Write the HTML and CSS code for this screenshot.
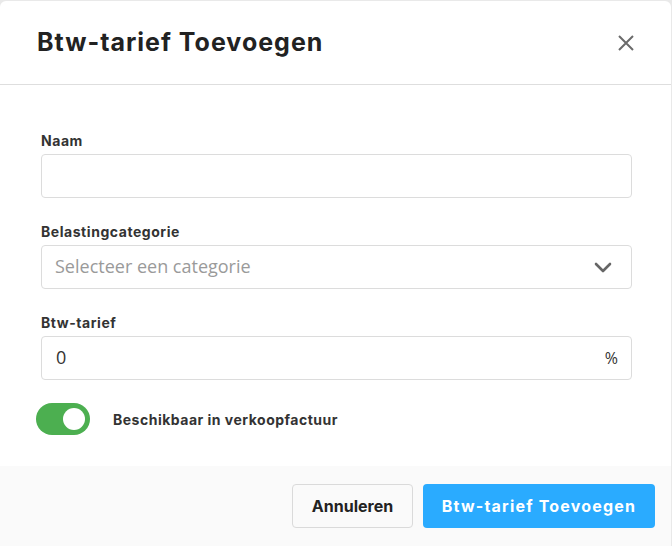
FILE: index.html
```html
<!DOCTYPE html>
<html lang="nl">
<head>
<meta charset="utf-8">
<link rel="stylesheet" href="styles.css">
</head>
<body>
<div class="modal">
  <header class="modal-header">
    <h1 class="title">Btw-tarief Toevoegen</h1>
    <button class="close" aria-label="Sluiten">
      <svg width="16" height="16" viewBox="0 0 16 16"><path d="M1 1 L15 15 M15 1 L1 15" stroke="#6b6b6b" stroke-width="2" fill="none"/></svg>
    </button>
  </header>
  <main class="modal-body">
    <div class="field">
      <label class="label">Naam</label>
      <div class="input"></div>
    </div>
    <div class="field">
      <label class="label">Belastingcategorie</label>
      <div class="input select">
        <span class="placeholder">Selecteer een categorie</span>
        <svg class="chev" width="18" height="11" viewBox="0 0 18 11"><path d="M2 2 L9 9 L16 2" stroke="#666" stroke-width="2.6" fill="none" stroke-linecap="round" stroke-linejoin="round"/></svg>
      </div>
    </div>
    <div class="field">
      <label class="label">Btw-tarief</label>
      <div class="input select">
        <span class="value">0</span>
        <span class="suffix">%</span>
      </div>
    </div>
    <div class="toggle-row">
      <span class="toggle"><span class="knob"></span></span>
      <span class="toggle-label">Beschikbaar in verkoopfactuur</span>
    </div>
  </main>
  <footer class="modal-footer">
    <button class="btn btn-secondary">Annuleren</button>
    <button class="btn btn-primary">Btw-tarief Toevoegen</button>
  </footer>
</div>
</body>
</html>
```
FILE: styles.css
```css
html, body {
  margin: 0;
  padding: 0;
  background: #e9e9e9;
}
.modal {
  width: 671px;
  height: 545px;
  margin-top: 1px;
  background: #fff;
  border-radius: 6px 6px 0 0;
  display: flex;
  flex-direction: column;
  font-family: "Inter", "Open Sans", sans-serif;
  overflow: hidden;
}
.modal-header {
  height: 83px;
  border-bottom: 1px solid #dedede;
  display: flex;
  align-items: center;
  justify-content: space-between;
  padding: 0 37px 0 37px;
  box-sizing: content-box;
}
.title {
  margin: 0;
  font-family: "Inter", sans-serif;
  font-size: 25px;
  font-weight: 700;
  color: #222;
  letter-spacing: 1px;
  padding-bottom: 1px;
}
.close {
  background: none;
  border: 0;
  padding: 0;
  width: 16px;
  height: 16px;
  display: flex;
}
.modal-body {
  flex: 1;
  padding: 47px 39px 0 41px;
  display: flex;
  flex-direction: column;
}
.field {
  display: flex;
  flex-direction: column;
  margin-bottom: 25px;
}
.label {
  font-size: 14px;
  font-weight: 700;
  color: #333;
  line-height: 17px;
  letter-spacing: 0.55px;
  margin-bottom: 5px;
}
.input {
  height: 42px;
  border: 1px solid #dcdcdc;
  border-radius: 4px;
  background: #fff;
}
.select {
  display: flex;
  align-items: center;
  justify-content: space-between;
  padding: 0 19px 0 13px;
}
.placeholder {
  font-family: "Open Sans", sans-serif;
  font-size: 18px;
  color: #9a9a9a;
  margin-top: -2px;
}
.value {
  font-family: "Open Sans", sans-serif;
  font-size: 18px;
  color: #333;
  padding-left: 1px;
  margin-top: -2px;
}
.suffix {
  font-family: "Open Sans", sans-serif;
  font-size: 16px;
  color: #333;
  margin-right: -6px;
}
.toggle-row {
  display: flex;
  align-items: center;
  margin-left: -5px;
  margin-top: -2px;
}
.toggle {
  width: 54px;
  height: 32px;
  border-radius: 16px;
  background: #4caf50;
  display: flex;
  align-items: center;
  justify-content: flex-end;
  padding-right: 5px;
  box-sizing: border-box;
}
.knob {
  width: 22px;
  height: 22px;
  border-radius: 50%;
  background: #fff;
}
.toggle-label {
  margin-left: 23px;
  font-size: 14px;
  font-weight: 700;
  color: #333;
  letter-spacing: 0.5px;
}
.modal-footer {
  height: 80px;
  background: #fafafa;
  display: flex;
  align-items: center;
  justify-content: flex-end;
  gap: 10px;
  padding: 0 16px 0 0;
}
.btn {
  height: 44px;
  border-radius: 4px;
  font-family: "Inter", sans-serif;
  font-size: 16px;
  font-weight: 700;
  padding: 0;
}
.btn-secondary {
  width: 121px;
  background: #fafafa;
  border: 1px solid #dadada;
  color: #222;
}
.btn-primary {
  width: 232px;
  background: #2aabff;
  border: 0;
  color: #fff;
  letter-spacing: 1.2px;
}
```
